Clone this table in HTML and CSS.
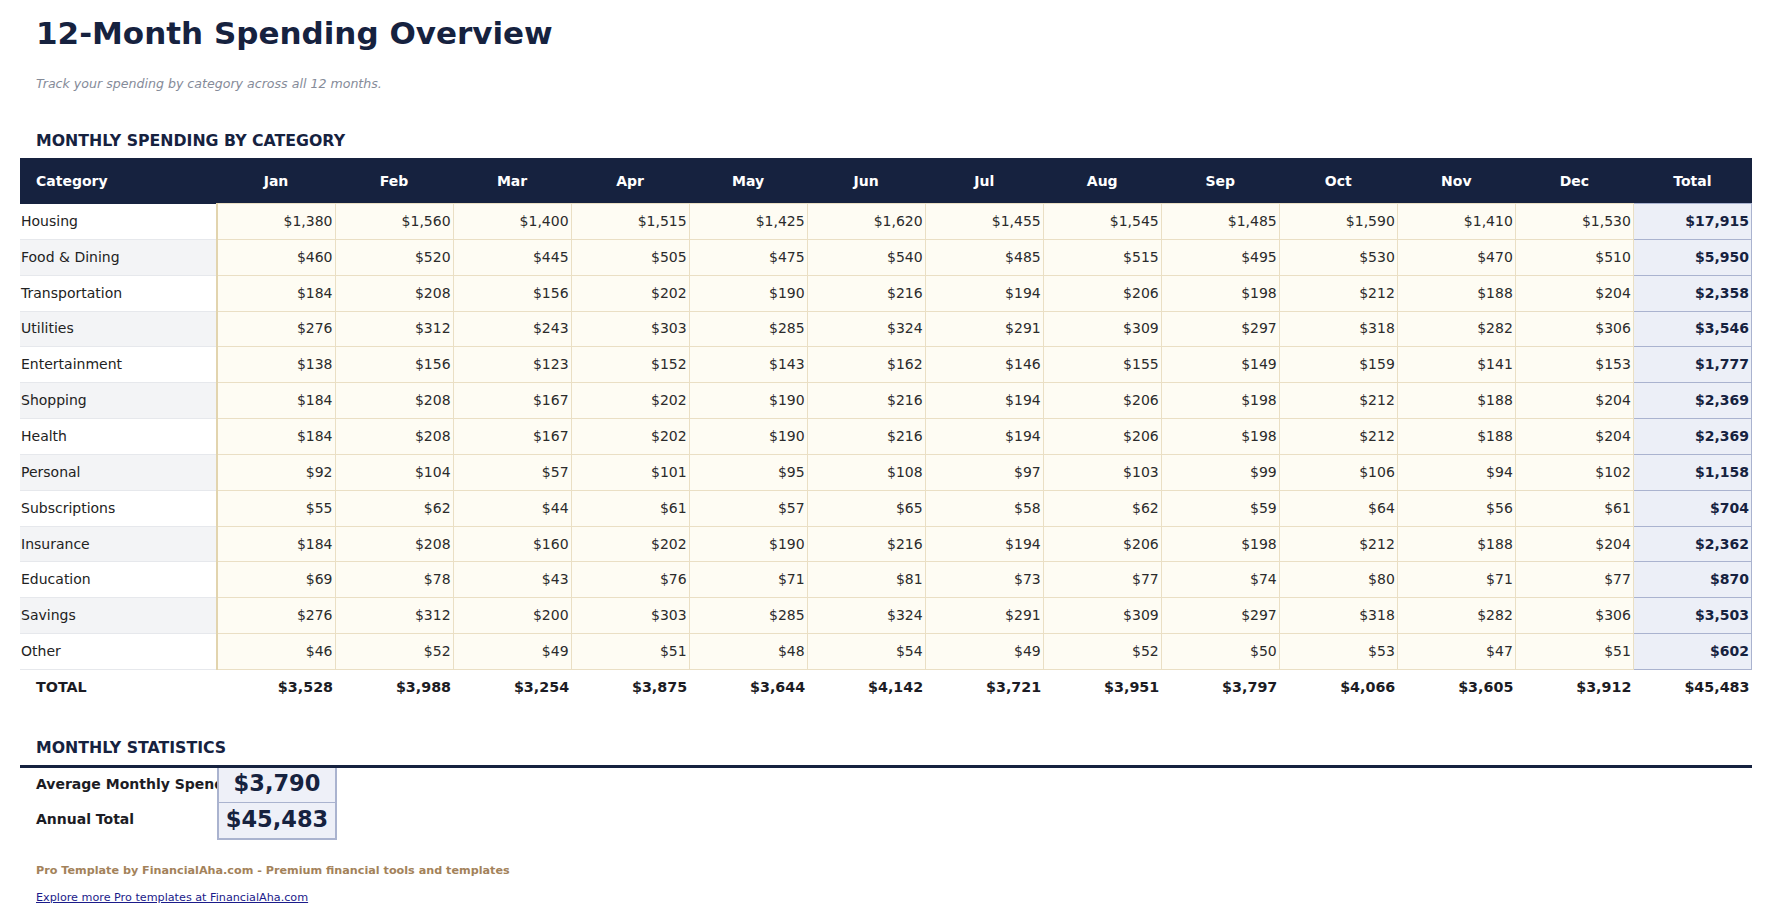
FILE: index.html
```html
<!DOCTYPE html>
<html lang="en">
<head>
<meta charset="utf-8">
<title>12-Month Spending Overview</title>
<link rel="stylesheet" href="styles.css">
</head>
<body>
<div class="page">
  <h1 class="title">12-Month Spending Overview</h1>
  <p class="subtitle">Track your spending by category across all 12 months.</p>

  <h2 class="section">MONTHLY SPENDING BY CATEGORY</h2>
  <table class="grid">
    <colgroup>
      <col class="c-cat">
      <col><col><col><col><col><col><col><col><col><col><col><col><col>
    </colgroup>
    <thead>
      <tr>
        <th class="h-cat">Category</th>
        <th>Jan</th><th>Feb</th><th>Mar</th><th>Apr</th><th>May</th><th>Jun</th>
        <th>Jul</th><th>Aug</th><th>Sep</th><th>Oct</th><th>Nov</th><th>Dec</th>
        <th>Total</th>
      </tr>
    </thead>
    <tbody>
      <tr><td class="cat">Housing</td><td class="m first">$1,380</td><td class="m">$1,560</td><td class="m">$1,400</td><td class="m">$1,515</td><td class="m">$1,425</td><td class="m">$1,620</td><td class="m">$1,455</td><td class="m">$1,545</td><td class="m">$1,485</td><td class="m">$1,590</td><td class="m">$1,410</td><td class="m">$1,530</td><td class="tot">$17,915</td></tr>
      <tr class="alt"><td class="cat">Food &amp; Dining</td><td class="m first">$460</td><td class="m">$520</td><td class="m">$445</td><td class="m">$505</td><td class="m">$475</td><td class="m">$540</td><td class="m">$485</td><td class="m">$515</td><td class="m">$495</td><td class="m">$530</td><td class="m">$470</td><td class="m">$510</td><td class="tot">$5,950</td></tr>
      <tr><td class="cat">Transportation</td><td class="m first">$184</td><td class="m">$208</td><td class="m">$156</td><td class="m">$202</td><td class="m">$190</td><td class="m">$216</td><td class="m">$194</td><td class="m">$206</td><td class="m">$198</td><td class="m">$212</td><td class="m">$188</td><td class="m">$204</td><td class="tot">$2,358</td></tr>
      <tr class="alt"><td class="cat">Utilities</td><td class="m first">$276</td><td class="m">$312</td><td class="m">$243</td><td class="m">$303</td><td class="m">$285</td><td class="m">$324</td><td class="m">$291</td><td class="m">$309</td><td class="m">$297</td><td class="m">$318</td><td class="m">$282</td><td class="m">$306</td><td class="tot">$3,546</td></tr>
      <tr><td class="cat">Entertainment</td><td class="m first">$138</td><td class="m">$156</td><td class="m">$123</td><td class="m">$152</td><td class="m">$143</td><td class="m">$162</td><td class="m">$146</td><td class="m">$155</td><td class="m">$149</td><td class="m">$159</td><td class="m">$141</td><td class="m">$153</td><td class="tot">$1,777</td></tr>
      <tr class="alt"><td class="cat">Shopping</td><td class="m first">$184</td><td class="m">$208</td><td class="m">$167</td><td class="m">$202</td><td class="m">$190</td><td class="m">$216</td><td class="m">$194</td><td class="m">$206</td><td class="m">$198</td><td class="m">$212</td><td class="m">$188</td><td class="m">$204</td><td class="tot">$2,369</td></tr>
      <tr><td class="cat">Health</td><td class="m first">$184</td><td class="m">$208</td><td class="m">$167</td><td class="m">$202</td><td class="m">$190</td><td class="m">$216</td><td class="m">$194</td><td class="m">$206</td><td class="m">$198</td><td class="m">$212</td><td class="m">$188</td><td class="m">$204</td><td class="tot">$2,369</td></tr>
      <tr class="alt"><td class="cat">Personal</td><td class="m first">$92</td><td class="m">$104</td><td class="m">$57</td><td class="m">$101</td><td class="m">$95</td><td class="m">$108</td><td class="m">$97</td><td class="m">$103</td><td class="m">$99</td><td class="m">$106</td><td class="m">$94</td><td class="m">$102</td><td class="tot">$1,158</td></tr>
      <tr><td class="cat">Subscriptions</td><td class="m first">$55</td><td class="m">$62</td><td class="m">$44</td><td class="m">$61</td><td class="m">$57</td><td class="m">$65</td><td class="m">$58</td><td class="m">$62</td><td class="m">$59</td><td class="m">$64</td><td class="m">$56</td><td class="m">$61</td><td class="tot">$704</td></tr>
      <tr class="alt"><td class="cat">Insurance</td><td class="m first">$184</td><td class="m">$208</td><td class="m">$160</td><td class="m">$202</td><td class="m">$190</td><td class="m">$216</td><td class="m">$194</td><td class="m">$206</td><td class="m">$198</td><td class="m">$212</td><td class="m">$188</td><td class="m">$204</td><td class="tot">$2,362</td></tr>
      <tr><td class="cat">Education</td><td class="m first">$69</td><td class="m">$78</td><td class="m">$43</td><td class="m">$76</td><td class="m">$71</td><td class="m">$81</td><td class="m">$73</td><td class="m">$77</td><td class="m">$74</td><td class="m">$80</td><td class="m">$71</td><td class="m">$77</td><td class="tot">$870</td></tr>
      <tr class="alt"><td class="cat">Savings</td><td class="m first">$276</td><td class="m">$312</td><td class="m">$200</td><td class="m">$303</td><td class="m">$285</td><td class="m">$324</td><td class="m">$291</td><td class="m">$309</td><td class="m">$297</td><td class="m">$318</td><td class="m">$282</td><td class="m">$306</td><td class="tot">$3,503</td></tr>
      <tr><td class="cat">Other</td><td class="m first">$46</td><td class="m">$52</td><td class="m">$49</td><td class="m">$51</td><td class="m">$48</td><td class="m">$54</td><td class="m">$49</td><td class="m">$52</td><td class="m">$50</td><td class="m">$53</td><td class="m">$47</td><td class="m">$51</td><td class="tot">$602</td></tr>
    </tbody>
    <tfoot>
      <tr class="sum">
        <td class="sum-label">TOTAL</td>
        <td>$3,528</td><td>$3,988</td><td>$3,254</td><td>$3,875</td><td>$3,644</td><td>$4,142</td>
        <td>$3,721</td><td>$3,951</td><td>$3,797</td><td>$4,066</td><td>$3,605</td><td>$3,912</td>
        <td>$45,483</td>
      </tr>
    </tfoot>
  </table>

  <h2 class="section stats-head">MONTHLY STATISTICS</h2>
  <table class="stats">
    <tr class="s1"><td class="s-label">Average Monthly Spending</td><td class="s-val">$3,790</td></tr>
    <tr class="s2"><td class="s-label">Annual Total</td><td class="s-val">$45,483</td></tr>
  </table>

  <p class="promo">Pro Template by FinancialAha.com - Premium financial tools and templates</p>
  <p class="more"><a href="#">Explore more Pro templates at FinancialAha.com</a></p>
</div>
</body>
</html>
```

FILE: styles.css
```css
html, body {
  margin: 0;
  padding: 0;
  background: #ffffff;
}

body {
  font-family: "DejaVu Sans", "Liberation Sans", sans-serif;
  color: #222222;
}

.page {
  padding: 15px 21px 0 20px;
}

.title {
  margin: 0 0 0 16px;
  font-size: 31px;
  line-height: 36px;
  font-weight: bold;
  color: #16223f;
}

.subtitle {
  margin: 25px 0 0 16px;
  font-size: 12.6px;
  line-height: 15px;
  font-style: italic;
  color: #858b99;
}

.section {
  margin: 41px 0 0 16px;
  font-size: 15.75px;
  line-height: 18px;
  font-weight: bold;
  color: #16223f;
}

.grid {
  margin-top: 8px;
  width: 1732px;
  table-layout: fixed;
  border-collapse: collapse;
  font-size: 14px;
}

.c-cat {
  width: 197px;
}

.grid thead th {
  height: 45px;
  padding: 0;
  background: #16223f;
  color: #ffffff;
  font-weight: bold;
  font-size: 14px;
  text-align: center;
}

.grid thead th.h-cat {
  text-align: left;
  padding-left: 16px;
}

.grid tbody td {
  height: 33.85px;
  padding: 0 2px 1px;
  white-space: nowrap;
}

.grid td.cat {
  padding-left: 1px;
  color: #222222;
  background: #ffffff;
  border-bottom: 1px solid #e6e8ec;
}

.grid tr.alt td.cat {
  background: #f3f4f6;
}

.grid td.m {
  text-align: right;
  background: #fefcf3;
  color: #2b2b2b;
  border: 1px solid #eadfc4;
}

.grid td.m.first {
  border-left: 2px solid #e2d4ae;
}

.grid td.tot {
  text-align: right;
  background: #eceff7;
  color: #16223f;
  font-weight: bold;
  border: 1px solid #aab3cf;
}

.grid tr.sum td {
  height: 34px;
  padding: 0 2px 1px;
  text-align: right;
  font-weight: bold;
  font-size: 14.3px;
  color: #1c1c24;
  border-top: 1px solid #cfd2d8;
}

.grid tr.sum td.sum-label {
  text-align: left;
  padding-left: 16px;
}

.stats-head {
  margin-top: 34px;
  margin-left: 0;
  padding: 0 0 8px 16px;
  border-bottom: 3px solid #16223f;
}

.stats {
  border-collapse: collapse;
  table-layout: fixed;
  width: 315px;
}

.stats td {
  padding: 0 0 3px 0;
}

.stats tr.s1 td {
  height: 31px;
}

.stats tr.s2 td {
  height: 32px;
}

.s-label {
  width: 181px;
  padding-left: 16px !important;
  font-size: 14px;
  font-weight: bold;
  color: #1c1c24;
  white-space: nowrap;
  overflow: hidden;
  text-overflow: clip;
}

.s-val {
  width: 116px;
  text-align: center;
  font-size: 22.5px;
  font-weight: bold;
  color: #16223f;
  background: #eef0f8;
  border: 2px solid #aab3cf;
  border-top: 0;
}

.stats tr.s1 .s-val {
  border-bottom: 1px solid #aab3cf;
}

.promo {
  margin: 24px 0 0 16px;
  font-size: 11.2px;
  line-height: 13px;
  font-weight: bold;
  color: #a3825a;
}

.more {
  margin: 14px 0 0 16px;
  font-size: 11.2px;
  line-height: 13px;
}

.more a {
  color: #1b1b8a;
  text-decoration: underline;
}
```
